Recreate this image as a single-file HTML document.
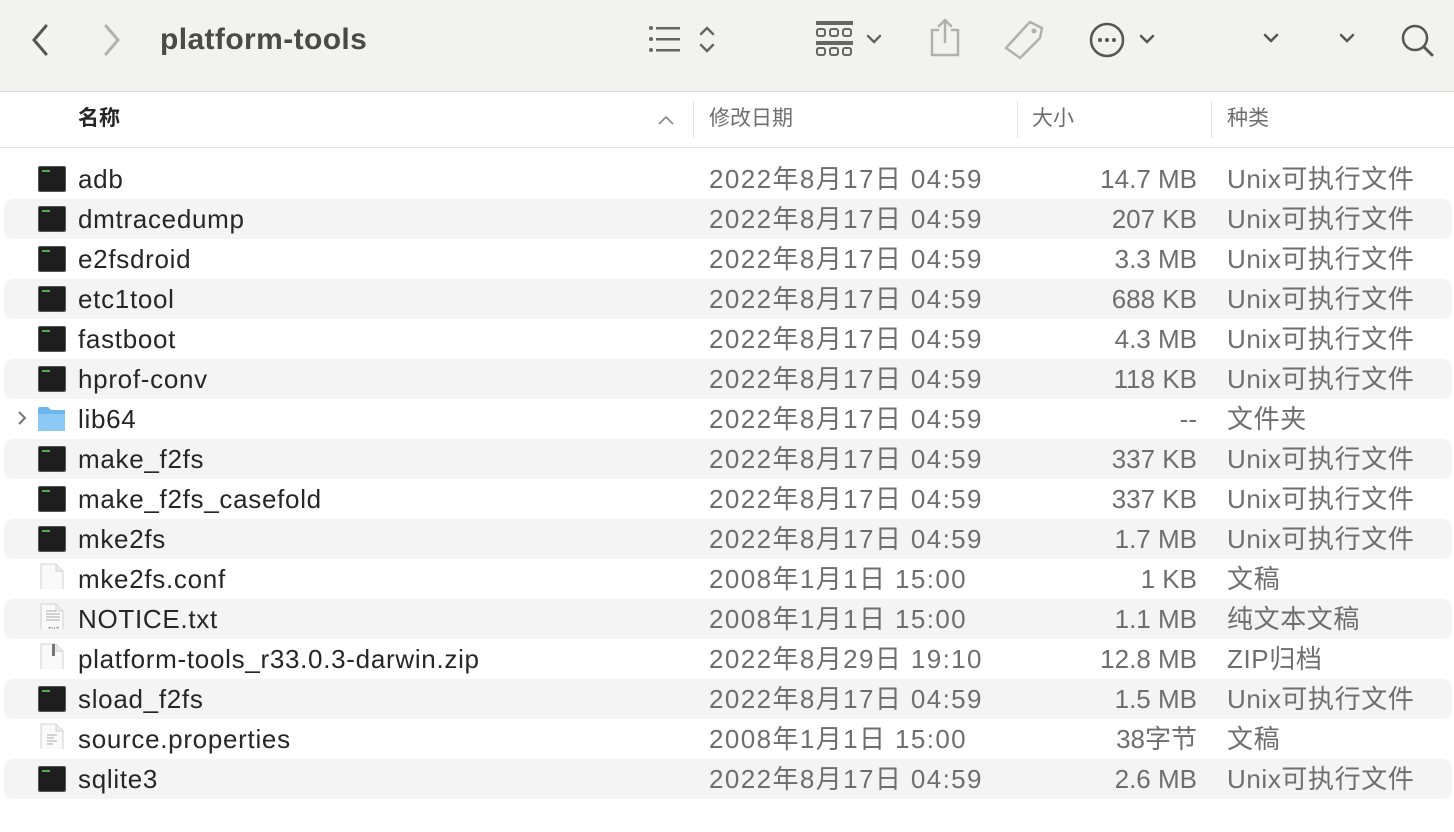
<!DOCTYPE html>
<html><head><meta charset="utf-8"><style>
*{margin:0;padding:0;box-sizing:border-box}
body{width:1454px;height:832px;background:#fff;font-family:"Liberation Sans","Noto Sans CJK SC",sans-serif;overflow:hidden;position:relative;color:#262626}
.tb{position:absolute;left:0;top:0;width:1454px;height:92px;background:#f2f2f1;border-bottom:1px solid #dcdcdc}
.title{position:absolute;left:160px;top:20px;line-height:40px;font-size:30px;font-weight:bold;color:#4a4a4a;letter-spacing:0.4px}
.hdr{position:absolute;left:0;top:93px;width:1454px;height:55px;border-bottom:1px solid #e2e2e2;font-size:21px;color:#6e6e6e}
.hdr span{position:absolute;top:0;line-height:52px}
.div{position:absolute;top:8px;width:1px;height:37px;background:#e2e2e2}
.row{position:absolute;left:4px;width:1448px;height:40px;border-radius:9px;font-size:26px}
.row.s{background:#f4f4f4}
.row span{position:absolute;top:0;line-height:40px;white-space:nowrap}
.n{left:74px;color:#262626;letter-spacing:0.7px}
.d{left:705px;color:#6e6e6e;letter-spacing:1.4px}
.z{right:255px;color:#6e6e6e}
.k{left:1223px;color:#6e6e6e;letter-spacing:0.6px}
.ic{position:absolute;left:34px;top:7px;width:28px;height:26px}
.term{background:#1e1e1e;border:1px solid #555;border-radius:2px}
.term:after{content:"";position:absolute;left:3px;top:3px;width:8px;height:2px;background:#4caf50}
svg{position:absolute}
</style></head><body>
<div class="tb">
<svg style="left:28px;top:22px" width="24" height="36"><path d="M18 4 L6 18 L18 32" stroke="#555" stroke-width="3" fill="none" stroke-linecap="round"/></svg>
<svg style="left:100px;top:22px" width="24" height="36"><path d="M6 4 L18 18 L6 32" stroke="#b0b0b0" stroke-width="3" fill="none" stroke-linecap="round"/></svg>
<div class="title">platform-tools</div>
<svg style="left:640px;top:20px" width="90" height="40"><g fill="#666"><circle cx="11" cy="8" r="2"/><circle cx="11" cy="19" r="2"/><circle cx="11" cy="30" r="2"/><rect x="16" y="7" width="24" height="2.5"/><rect x="16" y="18" width="24" height="2.5"/><rect x="16" y="29" width="24" height="2.5"/></g><path d="M61 14 L67 8 L73 14 M61 25 L67 31 L73 25" stroke="#666" stroke-width="2.5" fill="none" stroke-linecap="round"/></svg>
<svg style="left:810px;top:18px" width="80" height="44"><g fill="none" stroke="#666" stroke-width="2"><rect x="7" y="4" width="35" height="2" fill="#666"/><rect x="7" y="24" width="35" height="2" fill="#666"/><rect x="7" y="11" width="8" height="7" rx="2"/><rect x="20" y="11" width="8" height="7" rx="2"/><rect x="33" y="11" width="8" height="7" rx="2"/><rect x="7" y="30" width="8" height="7" rx="2"/><rect x="20" y="30" width="8" height="7" rx="2"/><rect x="33" y="30" width="8" height="7" rx="2"/><path d="M58 18 L64 24 L70 18" stroke-width="2.5" stroke-linecap="round"/></g></svg>
<svg style="left:925px;top:16px" width="40" height="44"><g fill="none" stroke="#b0b0b0" stroke-width="2.5" stroke-linecap="round"><path d="M13 14 H7 V39 H33 V14 H27"/><path d="M20 4 V26 M14 10 L20 4 L26 10"/></g></svg>
<svg style="left:1000px;top:18px" width="48" height="44"><path d="M30 4 L42 10 L40 20 L20 40 L6 30 L26 8 Z" fill="none" stroke="#b0b0b0" stroke-width="2.5" stroke-linejoin="round"/><circle cx="34" cy="13" r="2.5" fill="#b0b0b0"/></svg>
<svg style="left:1088px;top:20px" width="72" height="40"><circle cx="19" cy="20" r="16" fill="none" stroke="#555" stroke-width="2.5"/><g fill="#555"><circle cx="12" cy="20" r="2"/><circle cx="19" cy="20" r="2"/><circle cx="26" cy="20" r="2"/></g><path d="M53 16 L59 22 L65 16" stroke="#555" stroke-width="2.5" fill="none" stroke-linecap="round"/></svg>
<svg style="left:1260px;top:30px" width="24" height="20"><path d="M5 5 L11 11 L17 5" stroke="#555" stroke-width="2.5" fill="none" stroke-linecap="round"/></svg>
<svg style="left:1336px;top:30px" width="24" height="20"><path d="M5 5 L11 11 L17 5" stroke="#555" stroke-width="2.5" fill="none" stroke-linecap="round"/></svg>
<svg style="left:1398px;top:22px" width="40" height="40"><circle cx="17" cy="16" r="12" fill="none" stroke="#555" stroke-width="2.5"/><path d="M26 25 L34 33" stroke="#555" stroke-width="3" stroke-linecap="round"/></svg>
</div>
<div class="hdr">
<span style="left:78px;font-weight:bold;color:#262626">名称</span>
<svg style="left:656px;top:20px" width="20" height="14"><path d="M3 11 L10 4 L17 11" stroke="#888" stroke-width="1.6" fill="none"/></svg>
<div class="div" style="left:693px"></div><span style="left:709px">修改日期</span>
<div class="div" style="left:1017px"></div><span style="left:1032px">大小</span>
<div class="div" style="left:1211px"></div><span style="left:1227px">种类</span>
</div>
<div id="rows"></div>
<script>
var R=[["adb","t","2022年8月17日 04:59","14.7 MB","Unix可执行文件"],
["dmtracedump","t","2022年8月17日 04:59","207 KB","Unix可执行文件"],
["e2fsdroid","t","2022年8月17日 04:59","3.3 MB","Unix可执行文件"],
["etc1tool","t","2022年8月17日 04:59","688 KB","Unix可执行文件"],
["fastboot","t","2022年8月17日 04:59","4.3 MB","Unix可执行文件"],
["hprof-conv","t","2022年8月17日 04:59","118 KB","Unix可执行文件"],
["lib64","f","2022年8月17日 04:59","--","文件夹"],
["make_f2fs","t","2022年8月17日 04:59","337 KB","Unix可执行文件"],
["make_f2fs_casefold","t","2022年8月17日 04:59","337 KB","Unix可执行文件"],
["mke2fs","t","2022年8月17日 04:59","1.7 MB","Unix可执行文件"],
["mke2fs.conf","p","2008年1月1日 15:00","1 KB","文稿"],
["NOTICE.txt","x","2008年1月1日 15:00","1.1 MB","纯文本文稿"],
["platform-tools_r33.0.3-darwin.zip","z","2022年8月29日 19:10","12.8 MB","ZIP归档"],
["sload_f2fs","t","2022年8月17日 04:59","1.5 MB","Unix可执行文件"],
["source.properties","l","2008年1月1日 15:00","38字节","文稿"],
["sqlite3","t","2022年8月17日 04:59","2.6 MB","Unix可执行文件"]];
var h="";
R.forEach(function(r,i){
var ic;
if(r[1]=="t")ic='<div class="ic term"></div>';
else if(r[1]=="f")ic='<svg style="left:8px;top:9px" width="20" height="20"><path d="M7 4 L13 10 L7 16" stroke="#777" stroke-width="2" fill="none"/></svg><svg class="ic" style="left:33px;top:6px" width="30" height="28"><path d="M1 4 Q1 2 3 2 H11 L14 5 H27 Q29 5 29 7 V25 Q29 27 27 27 H3 Q1 27 1 25Z" fill="#6cb6ee"/><rect x="1" y="9" width="28" height="18" rx="2" fill="#8ccaf5"/></svg>';
else{var ex="";
if(r[1]=="x")ex='<g stroke="#aaa" stroke-width="1"><path d="M6 8H16M6 11H20M6 14H20M6 17H20"/></g><text x="8" y="29" font-size="6" fill="#555" font-family="Liberation Sans">TXT</text>';
if(r[1]=="l")ex='<g stroke="#bbb" stroke-width="1.2"><path d="M7 12H17M7 15H14M7 18H17M7 21H13"/></g>';
if(r[1]=="z")ex='<rect x="12" y="1" width="3" height="12" fill="#777"/>';
ic='<svg class="ic" style="left:36px;top:4px" width="24" height="32"><path d="M1 1 H16 L23 8 V31 H1Z" fill="#fafafa" stroke="#d0d0d0"/><path d="M16 1 V8 H23" fill="#eee" stroke="#d0d0d0"/>'+ex+'</svg>';}
h+='<div class="row'+(i%2?' s':'')+'" style="top:'+(159+i*40)+'px">'+ic+'<span class="n">'+r[0]+'</span><span class="d">'+r[2]+'</span><span class="z">'+r[3]+'</span><span class="k">'+r[4]+'</span></div>';
});
document.getElementById("rows").innerHTML=h;
</script>
</body></html>
